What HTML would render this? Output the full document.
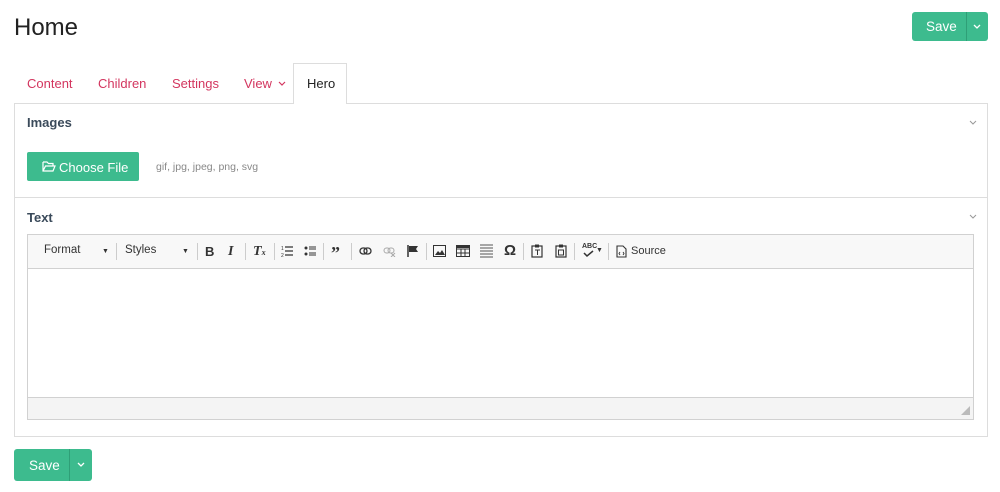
<!DOCTYPE html>
<html><head><meta charset="utf-8"><style>
*{box-sizing:border-box;margin:0;padding:0}
body{width:1000px;height:492px;background:#fff;font-family:"Liberation Sans",sans-serif;position:relative;overflow:hidden;color:#333}
.a{position:absolute}
.btn{position:absolute;background:#3dbb8e;border-radius:3px;color:#fff;font-size:14px}
.tab{position:absolute;top:76px;font-size:13px;color:#d3365f}
.tb{position:absolute;top:244px;height:16px;font-size:11.5px;color:#333}
.sep{position:absolute;top:243px;width:1px;height:17px;background:#ccc}
svg{display:block}
</style></head><body>
<div class="a" style="left:14px;top:14px;font-size:24px;color:#222">Home</div>

<div class="btn" style="left:912px;top:12px;width:76px;height:29px">
  <span class="a" style="left:14px;top:7px;font-size:13.5px">Save</span>
  <div class="a" style="left:54px;top:0;width:1px;height:29px;background:#2f9f77"></div>
  <svg class="a" style="left:61px;top:12px" width="8" height="6"><path d="M1 1l3 3 3-3" stroke="#fff" fill="none" stroke-width="1.3"/></svg>
</div>

<div class="tab" style="left:27px">Content</div>
<div class="tab" style="left:98px">Children</div>
<div class="tab" style="left:172px">Settings</div>
<div class="tab" style="left:244px">View</div>
<svg class="a" style="left:278px;top:81px" width="8" height="6"><path d="M1 1l3 3 3-3" stroke="#d3365f" fill="none" stroke-width="1.2"/></svg>
<div class="a" style="left:293px;top:63px;width:54px;height:41px;border:1px solid #ddd;border-bottom:none;background:#fff;z-index:2"></div>
<div class="tab" style="left:307px;color:#222;z-index:3">Hero</div>

<div class="a" style="left:14px;top:103px;width:974px;height:334px;border:1px solid #ddd"></div>
<div class="a" style="left:14px;top:197px;width:974px;height:1px;background:#ddd"></div>

<div class="a" style="left:27px;top:115px;font-size:13px;font-weight:bold;color:#3a4a5a">Images</div>
<svg class="a" style="left:969px;top:120px" width="8" height="6"><path d="M1 1l3 3 3-3" stroke="#999" fill="none" stroke-width="1"/></svg>
<div class="btn" style="left:27px;top:152px;width:112px;height:29px;border-radius:2px">
  <svg class="a" style="left:15px;top:9px" width="14" height="11"><path d="M1 1h4l1.5 1.5H11v2M1 1v9h10l2-5H3.5L1 10" stroke="#fff" fill="none" stroke-width="1.2"/></svg>
  <span class="a" style="left:32px;top:8px;font-size:13px">Choose File</span>
</div>
<div class="a" style="left:156px;top:161px;font-size:10.5px;color:#888">gif, jpg, jpeg, png, svg</div>

<div class="a" style="left:27px;top:210px;font-size:13px;font-weight:bold;color:#3a4a5a">Text</div>
<svg class="a" style="left:969px;top:214px" width="8" height="6"><path d="M1 1l3 3 3-3" stroke="#999" fill="none" stroke-width="1"/></svg>

<div class="a" style="left:27px;top:234px;width:947px;height:186px;border:1px solid #d1d1d1"></div>
<div class="a" style="left:28px;top:235px;width:945px;height:34px;background:#f8f8f8;border-bottom:1px solid #d1d1d1"></div>
<div class="a" style="left:28px;top:397px;width:945px;height:22px;background:#f4f4f4;border-top:1px solid #d1d1d1"></div>
<svg class="a" style="left:961px;top:406px" width="9" height="9"><path d="M9 0V9H0z" fill="#bbb"/></svg>

<div class="tb" style="left:44px">Format</div>
<div class="tb" style="left:102px;font-size:7px;top:248px">▼</div>
<div class="sep" style="left:116px"></div>
<div class="tb" style="left:125px">Styles</div>
<div class="tb" style="left:182px;font-size:7px;top:248px">▼</div>
<div class="sep" style="left:197px"></div>
<div class="tb" style="left:205px;font-weight:bold;font-size:13px;top:244px">B</div>
<div class="tb" style="left:228px;font-style:italic;font-weight:bold;font-family:'Liberation Serif',serif;font-size:14px">I</div>
<div class="sep" style="left:245px"></div>
<div class="tb" style="left:253px;font-style:italic;font-weight:bold;font-family:'Liberation Serif',serif;font-size:14px">T<span style="font-size:8px">x</span></div>
<div class="sep" style="left:274px"></div>
<svg class="a" style="left:281px;top:245px" width="12" height="12"><path d="M4 2h8M4 6h8M4 10h8" stroke="#333" stroke-width="1.2"/><text x="0" y="5" font-size="5" fill="#333">1</text><text x="0" y="12" font-size="5" fill="#333">2</text></svg>
<svg class="a" style="left:304px;top:245px" width="12" height="12"><circle cx="2" cy="3" r="1.5" fill="#333"/><circle cx="2" cy="9" r="1.5" fill="#333"/><path d="M5 2h7M5 4h7M5 8h7M5 10h7" stroke="#333" stroke-width="1"/></svg>
<div class="sep" style="left:323px"></div>
<div class="tb" style="left:331px;font-weight:bold;font-size:18px;top:243px;font-family:'Liberation Serif',serif">”</div>
<div class="sep" style="left:351px"></div>
<svg class="a" style="left:359px;top:247px" width="13" height="8"><rect x="1" y="1" width="7" height="6" rx="3" stroke="#333" fill="none" stroke-width="1.3"/><rect x="5" y="1" width="7" height="6" rx="3" stroke="#333" fill="none" stroke-width="1.3"/></svg>
<svg class="a" style="left:383px;top:247px" width="13" height="10" opacity=".4"><rect x="1" y="1" width="6" height="5" rx="2.5" stroke="#333" fill="none"/><rect x="5" y="1" width="6" height="5" rx="2.5" stroke="#333" fill="none"/><path d="M8 6l4 4M12 6l-4 4" stroke="#333"/></svg>
<svg class="a" style="left:407px;top:245px" width="12" height="12"><path d="M1 0v12" stroke="#333" stroke-width="1.5"/><path d="M2 1h9l-2 3 2 3H2z" fill="#333"/></svg>
<div class="sep" style="left:426px"></div>
<svg class="a" style="left:433px;top:245px" width="13" height="12"><rect x="0.5" y="0.5" width="12" height="11" stroke="#333" fill="none"/><path d="M2 10l3-4 2 2 2-3 3 5z" fill="#333"/></svg>
<svg class="a" style="left:456px;top:245px" width="14" height="12"><rect x="0.5" y="0.5" width="13" height="11" stroke="#333" fill="none"/><path d="M0 4h14M0 8h14M5 4v8M9 4v8" stroke="#333"/><rect x="0" y="0" width="14" height="3" fill="#333"/></svg>
<svg class="a" style="left:480px;top:244px" width="13" height="14"><path d="M0 1h13M0 4h13M0 7h13M0 10h13M0 13h13" stroke="#555" stroke-width="1"/></svg>
<div class="tb" style="left:504px;font-size:15px;top:242px;font-weight:bold">Ω</div>
<div class="sep" style="left:523px"></div>
<svg class="a" style="left:531px;top:244px" width="12" height="14"><rect x="1" y="2" width="10" height="11" stroke="#333" fill="none" stroke-width="1.2"/><rect x="4" y="0.5" width="4" height="3" fill="#333"/><path d="M4 6h5M6.5 6v5" stroke="#333"/></svg>
<svg class="a" style="left:555px;top:244px" width="12" height="14"><rect x="1" y="2" width="10" height="11" stroke="#333" fill="none" stroke-width="1.2"/><rect x="4" y="0.5" width="4" height="3" fill="#333"/><rect x="3.5" y="6" width="5" height="5" stroke="#333" fill="none"/></svg>
<div class="sep" style="left:574px"></div>
<div class="tb" style="left:582px;font-size:7px;top:243px;font-weight:bold">ABC</div>
<svg class="a" style="left:583px;top:250px" width="12" height="8"><path d="M1 3l3 3 6-5" stroke="#333" fill="none" stroke-width="1.5"/></svg>
<div class="tb" style="left:596px;font-size:7px;top:247px">▼</div>
<div class="sep" style="left:608px"></div>
<svg class="a" style="left:616px;top:245px" width="11" height="13"><path d="M1 1h6l3 3v8H1z" stroke="#333" fill="none" stroke-width="1.1"/><path d="M4 7l-1 1.5 1 1.5M7 7l1 1.5-1 1.5" stroke="#333" fill="none" stroke-width=".9"/></svg>
<div class="tb" style="left:631px;top:245px;font-size:11px">Source</div>

<div class="btn" style="left:14px;top:449px;width:78px;height:32px">
  <span class="a" style="left:15px;top:9px;font-size:13.5px">Save</span>
  <div class="a" style="left:55px;top:0;width:1px;height:32px;background:#2f9f77"></div>
  <svg class="a" style="left:63px;top:13px" width="8" height="6"><path d="M1 1l3 3 3-3" stroke="#fff" fill="none" stroke-width="1.3"/></svg>
</div>
</body></html>
